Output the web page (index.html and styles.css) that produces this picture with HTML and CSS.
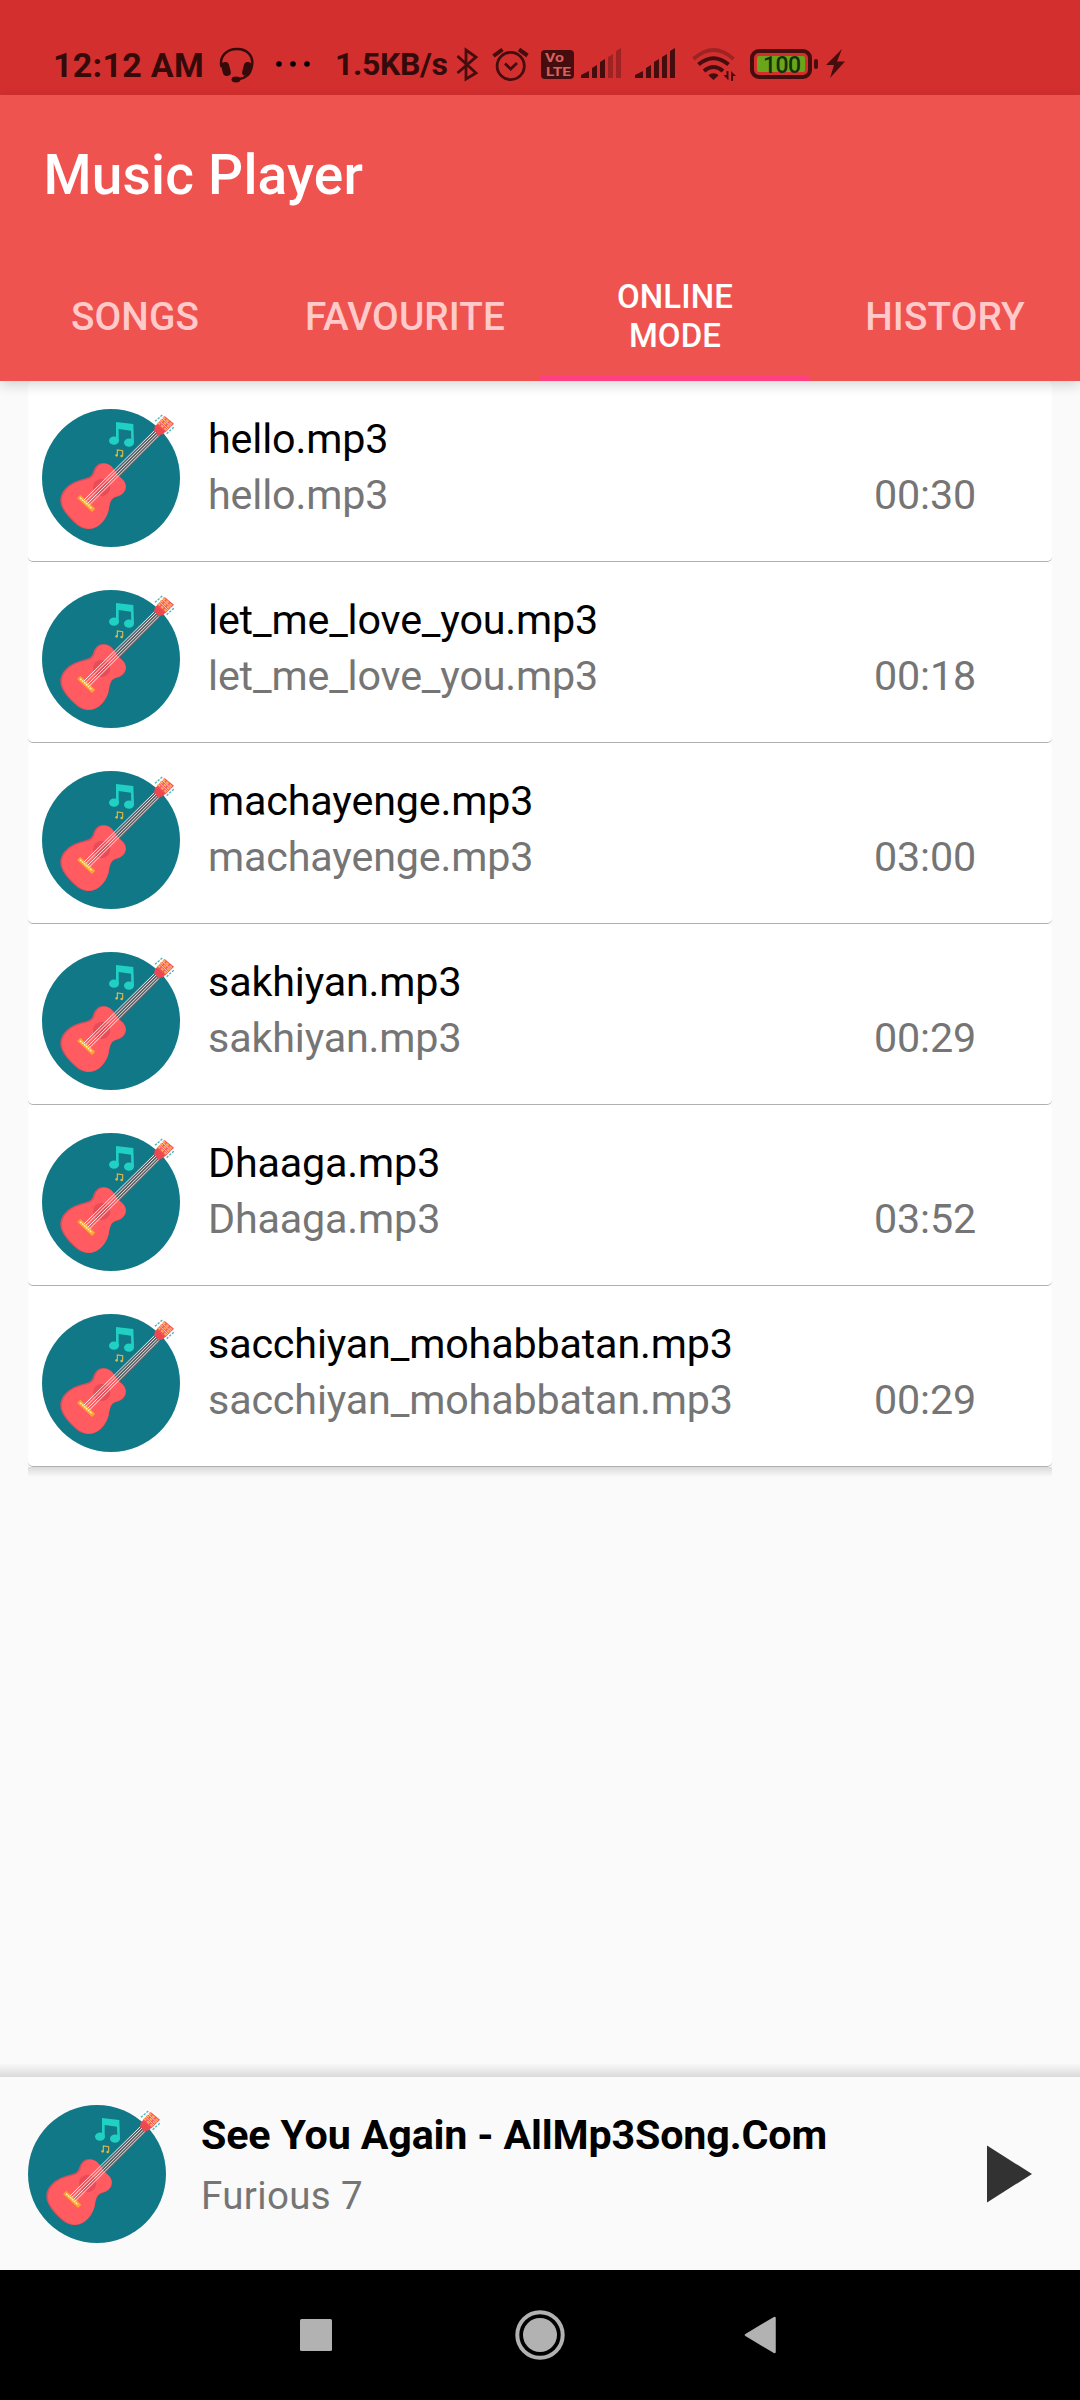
FILE: index.html
```html
<!DOCTYPE html>
<html lang="en">
<head>
<meta charset="utf-8">
<title>Music Player</title>
<link rel="stylesheet" href="styles.css">
</head>
<body>
<svg class="defs" width="0" height="0" aria-hidden="true">
  <symbol id="guitar" viewBox="66 87 414 414">
    <circle cx="273" cy="294" r="207" fill="#107886"/>
    <g fill="#20d0c2">
      <path d="M288 126L340 132L342 188H334L333 152L296 147V182H288Z"/>
      <ellipse cx="282" cy="182" rx="15" ry="12.5"/>
      <ellipse cx="327" cy="188" rx="15" ry="12.5"/>
    </g>
    <path d="M292 224V210L308 212V227" fill="none" stroke="#d9b84a" stroke-width="3.5"/>
    <circle cx="290" cy="226" r="4" fill="#d9b84a"/><circle cx="305" cy="228" r="4" fill="#d9b84a"/>
    <path d="M292 282L410 161" stroke="#5d6065" stroke-width="24"/>
    <path d="M250 249C232 249 223 263 219 277C214 291 203 294 190 297C155 304 121 328 121 362C121 386 146 412 163 428C178 442 192 447 207 447C238 446 259 418 266 392C270 372 271 357 287 351C306 348 318 336 318 319C317 300 301 294 292 282C282 265 270 249 250 249Z" fill="#d9505e"/>
    <path d="M254 251C236 250 228 264 224 279C219 294 207 297 195 300C158 307 126 331 126 363C126 386 149 410 166 426C180 440 193 446 207 446C238 445 258 417 265 392C269 371 270 356 286 350C305 347 317 335 317 319C316 301 300 295 291 283C281 266 272 252 254 251Z" fill="#ff5b61"/>
    <circle cx="245" cy="322" r="26" fill="#e84d57"/>
    <path d="M176 349L221 391" stroke="#f9a530" stroke-width="14"/>
    <path d="M180 353L216 386" stroke="#fff3b8" stroke-width="4" stroke-dasharray="6 2"/>
    <path d="M192 360L404 151M197 365L408 156M203 370L413 161M208 375L417 166" stroke="#fff" stroke-width="2.6"/>
    <path d="M404 124L428 101M435 163L464 137" stroke="#fff" stroke-width="12"/>
    <path d="M405 124L429 103M440 161L463 140" stroke="#45b3b5" stroke-width="4" stroke-dasharray="7 4"/>
    <path d="M402 151L405 139L412 132L437 154L429 163L415 166Z" fill="#ef4750"/>
    <path d="M410 133L434 108L462 131L436 157Z" fill="#f4535c"/>
    <path d="M414 127L440 151M422 118L449 143M429 111L457 135" stroke="#ffb04c" stroke-width="5.5" stroke-dasharray="9 4"/>
    <path d="M418 122L444 147M426 114L453 139" stroke="#fff" stroke-width="2"/>
  </symbol>
</svg>

<div class="screen">
  <div class="statusbar">
    <span class="clock">12:12 AM</span>
    <svg class="headset" width="36" height="36" viewBox="0 0 36 36">
      <path d="M2.500 20C0 9 8 2 18 2S36 9 32.500 21C31 28 27 31 20 32" fill="none" stroke="#350a0a" stroke-width="2.400"/>
      <rect x="3" y="15" width="8" height="14" rx="3.500" transform="rotate(-14 7 22)" fill="#350a0a"/>
      <rect x="24" y="15" width="8" height="14" rx="3.500" transform="rotate(14 28 22)" fill="#350a0a"/>
      <ellipse cx="17" cy="32.500" rx="4.500" ry="3" fill="#350a0a"/>
    </svg>
    <svg class="dots" width="34" height="6" viewBox="0 0 34 6"><circle cx="3" cy="3" r="2.800"/><circle cx="17" cy="3" r="2.800"/><circle cx="31" cy="3" r="2.800"/></svg>
    <span class="speed">1.5KB/s</span>
    <svg class="status-icons" width="392" height="36" viewBox="0 0 392 36">
      <g fill="none" stroke="#450d0d" stroke-width="2.800">
        <path d="M1.500 9L20 26L10 32V3L20 10L1.500 26"/>
        <circle cx="54.700" cy="19" r="13.600"/>
        <path d="M49 16.500L54.700 22L61 16"/>
        <path d="M37.500 9L46.500 2.500M71.500 8.500L63 2.500" stroke-width="4"/>
      </g>
      <rect x="85" y="3" width="33" height="29" rx="4" fill="#450d0d"/>
      <text x="89" y="15" class="volte" textLength="19" lengthAdjust="spacingAndGlyphs">Vo</text>
      <text x="90" y="29" class="volte" textLength="25" lengthAdjust="spacingAndGlyphs">LTE</text>
      <g fill="#450d0d">
        <path d="M125 31V28L133 24V31ZM136 31V21L141 18V31ZM144 31V15L149 12V31Z"/>
        <path d="M152 31V10L157 7V31ZM160 31V4L165 1V31Z" opacity=".36"/>
        <path d="M179 31V28L187 24V31ZM190 31V21L195 18V31ZM198 31V15L203 12V31ZM206 31V10L211 7V31ZM214 31V4L219 1V31Z"/>
        <path d="M252.500 28.500C254.500 25.500 260.500 25.500 262.500 28.500L257.500 33Z"/>
        <path d="M272 33L267.500 28H270.500V24H272.500V33ZM275 24L280 29H277V34H275Z"/>
      </g>
      <g fill="none" stroke="#450d0d" stroke-width="4">
        <path d="M248 24Q257.500 16 267 24"/>
        <path d="M242.500 17.500Q257.500 5 272.500 17.500"/>
        <path d="M237.500 12Q257.500 -6 277.500 12" opacity=".36"/>
      </g>
      <rect x="296" y="4" width="58" height="26" rx="7" fill="#d32f2f" stroke="#450d0d" stroke-width="4"/>
      <rect x="301" y="9" width="48" height="16" rx="2" fill="#6ba51c"/>
      <rect x="358" y="12" width="4" height="10" rx="2" fill="#450d0d"/>
      <text x="307" y="26" class="battery" textLength="38">100</text>
      <path d="M386 2L370 18H378L374 31L389 14.500H381Z" fill="#450d0d"/>
    </svg>
  </div>

  <header class="appbar">
    <h1 class="app-title">Music Player</h1>
    <nav class="tabs">
      <div class="tab">SONGS</div>
      <div class="tab">FAVOURITE</div>
      <div class="tab tab-active">ONLINE<br>MODE</div>
      <div class="tab">HISTORY</div>
    </nav>
  </header>

  <main class="list">
    <article class="card"><svg class="art"><use href="#guitar"/></svg><div class="info"><div class="name">hello.mp3</div><div class="sub">hello.mp3</div></div><div class="time">00:30</div></article>
    <article class="card"><svg class="art"><use href="#guitar"/></svg><div class="info"><div class="name">let_me_love_you.mp3</div><div class="sub">let_me_love_you.mp3</div></div><div class="time">00:18</div></article>
    <article class="card"><svg class="art"><use href="#guitar"/></svg><div class="info"><div class="name">machayenge.mp3</div><div class="sub">machayenge.mp3</div></div><div class="time">03:00</div></article>
    <article class="card"><svg class="art"><use href="#guitar"/></svg><div class="info"><div class="name">sakhiyan.mp3</div><div class="sub">sakhiyan.mp3</div></div><div class="time">00:29</div></article>
    <article class="card"><svg class="art"><use href="#guitar"/></svg><div class="info"><div class="name">Dhaaga.mp3</div><div class="sub">Dhaaga.mp3</div></div><div class="time">03:52</div></article>
    <article class="card"><svg class="art"><use href="#guitar"/></svg><div class="info"><div class="name">sacchiyan_mohabbatan.mp3</div><div class="sub">sacchiyan_mohabbatan.mp3</div></div><div class="time">00:29</div></article>
    <div class="list-shadow"></div>
  </main>

  <div class="player-shadow"></div>
  <section class="player">
    <svg class="art"><use href="#guitar"/></svg>
    <div class="now">
      <div class="now-title">See You Again - AllMp3Song.Com</div>
      <div class="now-artist">Furious 7</div>
    </div>
    <svg class="play" width="45" height="58" viewBox="0 0 45 58"><path d="M0 0.500L45 29L0 57.500Z" fill="#323232"/></svg>
  </section>

  <footer class="navbar">
    <svg width="32" height="32" viewBox="0 0 32 32"><rect width="32" height="32" rx="1.500" fill="#b2b2b2"/></svg>
    <svg width="50" height="50" viewBox="0 0 50 50"><circle cx="25" cy="25" r="22.700" fill="none" stroke="#b2b2b2" stroke-width="4"/><circle cx="25" cy="25" r="17" fill="#b2b2b2"/></svg>
    <svg width="32" height="38" viewBox="0 0 32 38"><path d="M2 19L30.500 2V36Z" fill="#b2b2b2" stroke="#b2b2b2" stroke-width="2.500" stroke-linejoin="round"/></svg>
  </footer>
</div>
</body>
</html>
```
FILE: styles.css
```css
* { box-sizing: border-box; }
body { margin: 0; background: #fafafa; font-family: Roboto, "Noto Sans", sans-serif; }
svg { display: block; flex: none; }
.defs { position: absolute; }
.screen { width: 1080px; height: 2400px; display: flex; flex-direction: column; overflow: hidden; }

.statusbar { height: 95px; flex: none; background: #d32f2f; display: flex; align-items: flex-start; padding: 45px 0 0 53px; white-space: nowrap; color: #350a0a; font-weight: 700; }
.clock { width: 166px; font-size: 34px; line-height: 40px; letter-spacing: .3px; }
.headset { margin-top: 2px; }
.dots { margin: 16px 0 0 21px; }
.speed { margin-left: 25px; width: 121px; font-size: 32px; line-height: 39px; letter-spacing: -.35px; }
.status-icons { margin-top: 2px; }
.volte { font: 700 12px Roboto, sans-serif; fill: #d8605f; }
.battery { font: 500 23px Roboto, sans-serif; fill: #16300a; }

.appbar { position: relative; z-index: 1; height: 286px; flex: none; background: #ef5350; color: #fff; box-shadow: 0 4px 12px rgba(0, 0, 0, .16); }
.app-title { margin: 0; height: 154px; padding: 48px 0 0 43.5px; font-size: 55px; line-height: 64px; font-weight: 500; letter-spacing: .2px; }
.tabs { display: grid; grid-template-columns: repeat(4, 1fr); height: 132px; }
.tab { display: flex; align-items: center; justify-content: center; padding-top: 4px; font-size: 38.75px; line-height: 40px; font-weight: 500; color: #ffcac9; letter-spacing: .1px; }
.tab-active { padding-top: 8px; border-bottom: 6px solid #ff4081; font-size: 33px; line-height: 39px; color: #fff; text-align: center; }

.list { flex: 1; padding: 0 28px; display: flex; flex-direction: column; }
.card { height: 181px; flex: none; display: flex; padding-left: 14px; background: #fff; border-bottom: 1px solid #b0b0b0; border-radius: 5px; }
.list-shadow { height: 10px; background: linear-gradient(#dadada, #fafafa); }
.art { width: 138px; height: 138px; margin-top: 28px; }
.info { flex: 1; padding: 30px 0 0 28px; font-size: 41.25px; line-height: 56px; color: #000; letter-spacing: -.15px; }
.sub, .time { color: #757575; }
.time { padding-top: 86px; width: 178px; font-size: 41.25px; line-height: 56px; letter-spacing: -.15px; }

.player-shadow { height: 14px; background: linear-gradient(#fafafa, #dadada); }
.player { height: 193px; flex: none; display: flex; padding-left: 28px; background: #fafafa; }
.now { flex: 1; padding: 30px 0 0 35px; line-height: 56px; }
.now-title { font-size: 41.25px; font-weight: 700; color: #000; letter-spacing: -.17px; }
.now-artist { margin-top: 5px; font-size: 38.5px; color: #757575; letter-spacing: .35px; }
.play { margin: 68px 48px 0 0; }

.navbar { height: 130px; flex: none; background: #000; display: flex; align-items: center; justify-content: center; gap: 183px; padding-right: 4px; }
.navbar svg:last-child { margin-left: -4px; }
```
